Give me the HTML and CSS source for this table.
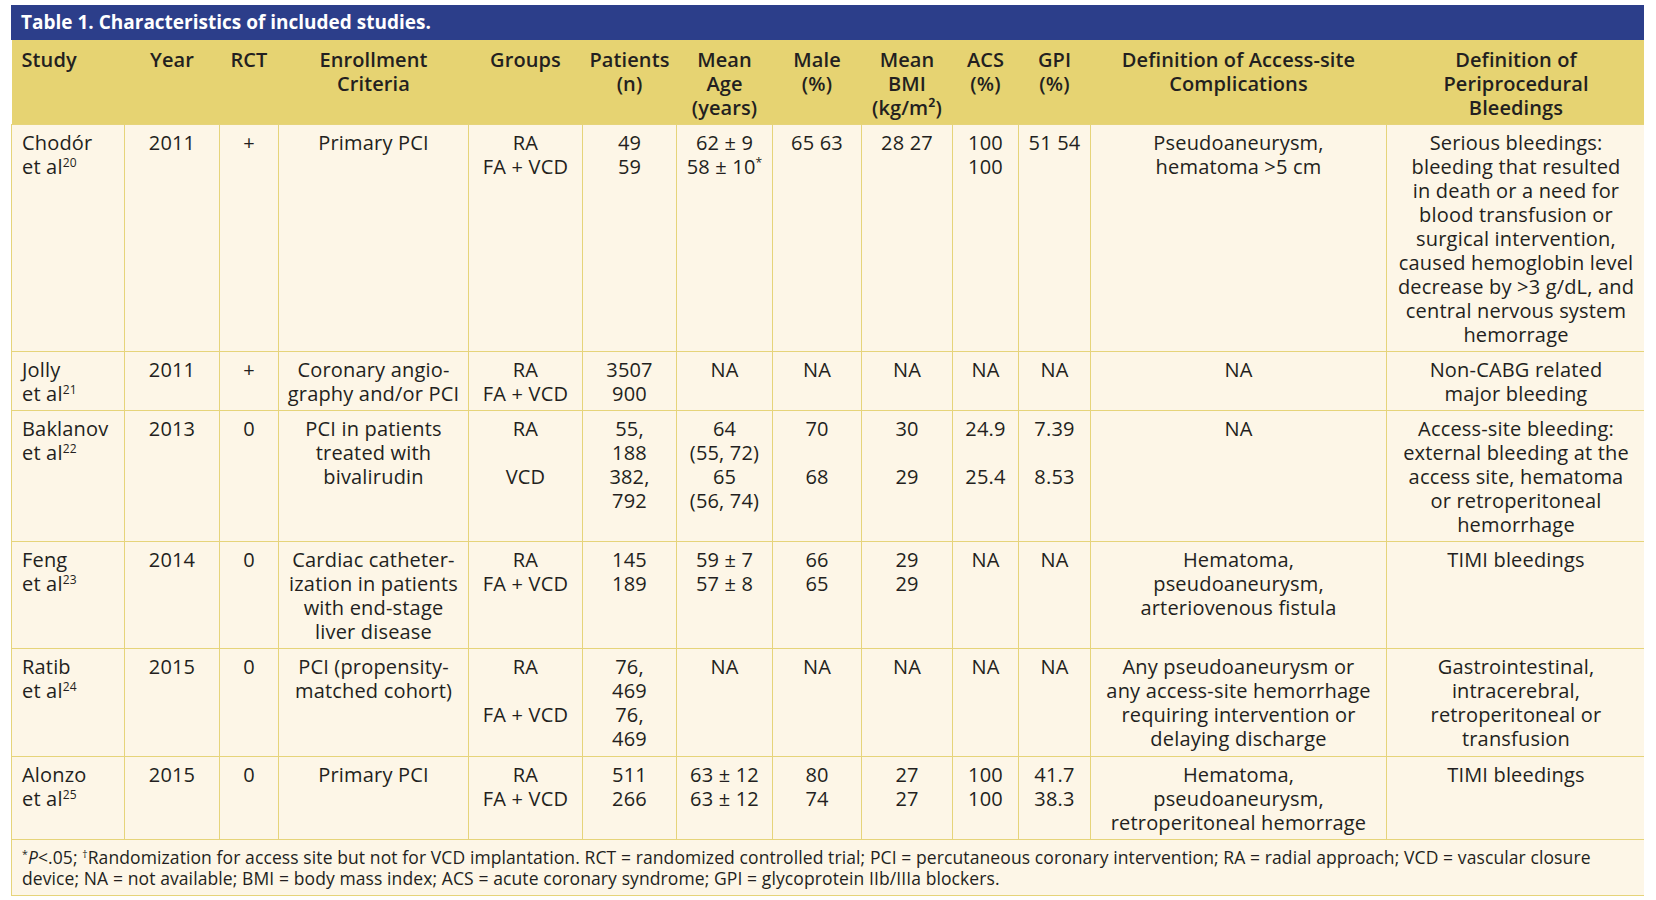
FILE: index.html
```html
<!DOCTYPE html>
<html lang="en">
<head>
<meta charset="utf-8">
<title>Table 1. Characteristics of included studies.</title>
<link rel="stylesheet" href="styles.css">
</head>
<body>
<div class="figure">
  <div class="title">Table 1. Characteristics of included studies.</div>
  <table class="studies">
    <colgroup>
      <col class="c-study"><col class="c-year"><col class="c-rct"><col class="c-enroll"><col class="c-groups"><col class="c-pat"><col class="c-age"><col class="c-male"><col class="c-bmi"><col class="c-acs"><col class="c-gpi"><col class="c-access"><col class="c-peri">
    </colgroup>
    <thead>
      <tr>
        <th class="left">Study</th>
        <th>Year</th>
        <th>RCT</th>
        <th>Enrollment<br>Criteria</th>
        <th>Groups</th>
        <th>Patients<br>(n)</th>
        <th>Mean<br>Age<br>(years)</th>
        <th>Male<br>(%)</th>
        <th>Mean<br>BMI<br>(kg/m²)</th>
        <th>ACS<br>(%)</th>
        <th>GPI<br>(%)</th>
        <th>Definition of Access-site<br>Complications</th>
        <th>Definition of<br>Periprocedural<br>Bleedings</th>
      </tr>
    </thead>
    <tbody>
      <tr>
        <td class="left">Chodór<br>et al<sup>20</sup></td>
        <td>2011</td>
        <td>+</td>
        <td>Primary PCI</td>
        <td>RA<br>FA + VCD</td>
        <td>49<br>59</td>
        <td>62 ± 9<br>58 ± 10<sup>*</sup></td>
        <td>65 63</td>
        <td>28 27</td>
        <td>100<br>100</td>
        <td>51 54</td>
        <td>Pseudoaneurysm,<br>hematoma &gt;5 cm</td>
        <td>Serious bleedings:<br>bleeding that resulted<br>in death or a need for<br>blood transfusion or<br>surgical intervention,<br>caused hemoglobin level<br>decrease by &gt;3 g/dL, and<br>central nervous system<br>hemorrage</td>
      </tr>
      <tr>
        <td class="left">Jolly<br>et al<sup>21</sup></td>
        <td>2011</td>
        <td>+</td>
        <td>Coronary angio-<br>graphy and/or PCI</td>
        <td>RA<br>FA + VCD</td>
        <td>3507<br>900</td>
        <td>NA</td>
        <td>NA</td>
        <td>NA</td>
        <td>NA</td>
        <td>NA</td>
        <td>NA</td>
        <td>Non-CABG related<br>major bleeding</td>
      </tr>
      <tr>
        <td class="left">Baklanov<br>et al<sup>22</sup></td>
        <td>2013</td>
        <td>0</td>
        <td>PCI in patients<br>treated with<br>bivalirudin</td>
        <td>RA<br><br>VCD</td>
        <td>55,<br>188<br>382,<br>792</td>
        <td>64<br>(55, 72)<br>65<br>(56, 74)</td>
        <td>70<br><br>68</td>
        <td>30<br><br>29</td>
        <td>24.9<br><br>25.4</td>
        <td>7.39<br><br>8.53</td>
        <td>NA</td>
        <td>Access-site bleeding:<br>external bleeding at the<br>access site, hematoma<br>or retroperitoneal<br>hemorrhage</td>
      </tr>
      <tr>
        <td class="left">Feng<br>et al<sup>23</sup></td>
        <td>2014</td>
        <td>0</td>
        <td>Cardiac catheter-<br>ization in patients<br>with end-stage<br>liver disease</td>
        <td>RA<br>FA + VCD</td>
        <td>145<br>189</td>
        <td>59 ± 7<br>57 ± 8</td>
        <td>66<br>65</td>
        <td>29<br>29</td>
        <td>NA</td>
        <td>NA</td>
        <td>Hematoma,<br>pseudoaneurysm,<br>arteriovenous fistula</td>
        <td>TIMI bleedings</td>
      </tr>
      <tr class="tall">
        <td class="left">Ratib<br>et al<sup>24</sup></td>
        <td>2015</td>
        <td>0</td>
        <td>PCI (propensity-<br>matched cohort)</td>
        <td>RA<br><br>FA + VCD</td>
        <td>76,<br>469<br>76,<br>469</td>
        <td>NA</td>
        <td>NA</td>
        <td>NA</td>
        <td>NA</td>
        <td>NA</td>
        <td>Any pseudoaneurysm or<br>any access-site hemorrhage<br>requiring intervention or<br>delaying discharge</td>
        <td>Gastrointestinal,<br>intracerebral,<br>retroperitoneal or<br>transfusion</td>
      </tr>
      <tr>
        <td class="left">Alonzo<br>et al<sup>25</sup></td>
        <td>2015</td>
        <td>0</td>
        <td>Primary PCI</td>
        <td>RA<br>FA + VCD</td>
        <td>511<br>266</td>
        <td>63 ± 12<br>63 ± 12</td>
        <td>80<br>74</td>
        <td>27<br>27</td>
        <td>100<br>100</td>
        <td>41.7<br>38.3</td>
        <td>Hematoma,<br>pseudoaneurysm,<br>retroperitoneal hemorrage</td>
        <td>TIMI bleedings</td>
      </tr>
    </tbody>
  </table>
  <div class="notes"><sup>*</sup><i>P</i>&lt;.05; <sup>†</sup>Randomization for access site but not for VCD implantation. RCT = randomized controlled trial; PCI = percutaneous coronary intervention; RA = radial approach; VCD = vascular closure<br>device; NA = not available; BMI = body mass index; ACS = acute coronary syndrome; GPI = glycoprotein IIb/IIIa blockers.</div>
</div>
</body>
</html>
```
FILE: styles.css
```css
html, body {
  background: #ffffff;
}

body {
  margin: 5px 12px 0 11px;
  font-family: "Open Sans", "Liberation Sans", sans-serif;
  color: #231f20;
}

.figure {
  width: 1634px;
}

.title {
  background: #2c3e8a;
  color: #ffffff;
  font-weight: 700;
  font-size: 19px;
  height: 35px;
  line-height: 35px;
  padding-left: 10px;
  white-space: nowrap;
}

.studies {
  width: 1634px;
  table-layout: fixed;
  border-collapse: collapse;
  font-size: 20px;
  line-height: 24px;
  letter-spacing: 0.18px;
}

.c-study { width: 113px; }
.c-year { width: 95px; }
.c-rct { width: 59px; }
.c-enroll { width: 190px; }
.c-groups { width: 114px; }
.c-pat { width: 94px; }
.c-age { width: 96px; }
.c-male { width: 89px; }
.c-bmi { width: 91px; }
.c-acs { width: 66px; }
.c-gpi { width: 72px; }
.c-access { width: 296px; }
.c-peri { width: 259px; }

.studies th {
  background: #e6d372;
  font-weight: 600;
  letter-spacing: 0.1px;
  text-align: center;
  vertical-align: top;
  padding: 8px 2px 4px;
  white-space: nowrap;
  color: #231f20;
}

.studies td {
  background: #fdf6e7;
  text-align: center;
  vertical-align: top;
  padding: 6px 2px 4px;
  white-space: nowrap;
  border: 1px solid #e6d47a;
}

.studies tr.tall td {
  padding-bottom: 5px;
}

.studies th.left,
.studies td.left {
  text-align: left;
  padding-left: 10px;
}

.studies sup {
  font-size: 0.6em;
  line-height: 0;
  vertical-align: 0.6em;
}

.notes {
  background: #fdf6e7;
  border: 1px solid #e6d47a;
  border-top: none;
  font-size: 17.5px;
  letter-spacing: 0.1px;
  line-height: 21px;
  padding: 7px 10px 6px;
  white-space: nowrap;
}

.notes sup {
  font-size: 0.6em;
  line-height: 0;
  vertical-align: 0.6em;
}
```
